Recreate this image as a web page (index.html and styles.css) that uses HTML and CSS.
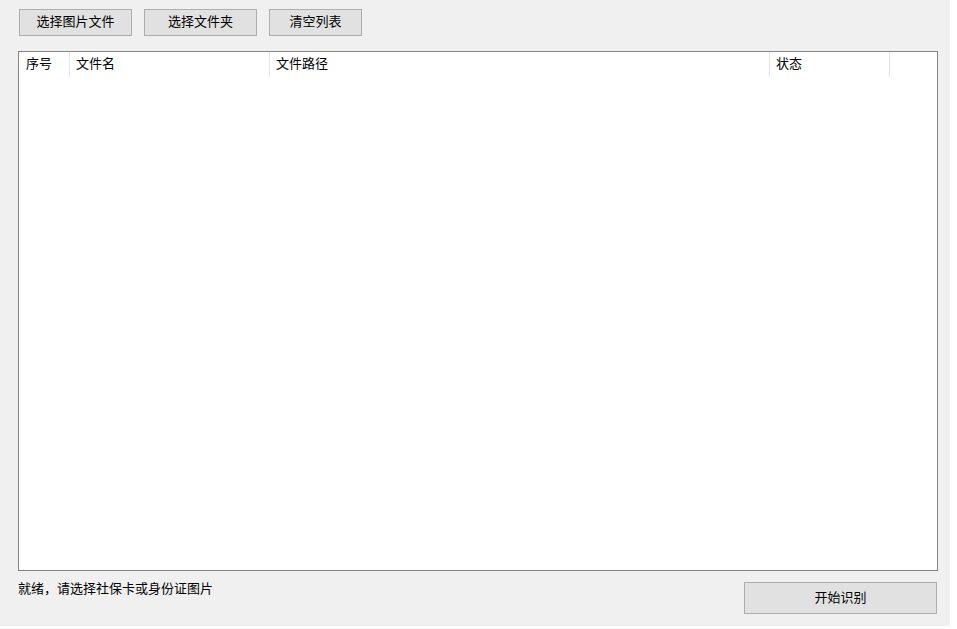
FILE: index.html
```html
<!DOCTYPE html>
<html lang="zh-CN">
<head>
<meta charset="utf-8">
<title>社保卡/身份证识别</title>
<link rel="stylesheet" href="styles.css">
</head>
<body>
<div class="window">
  <div class="toolbar">
    <button class="btn btn-img">选择图片文件</button>
    <button class="btn btn-folder">选择文件夹</button>
    <button class="btn btn-clear">清空列表</button>
  </div>
  <div class="list">
    <div class="list-head">
      <div class="col col-no">序号</div>
      <div class="col col-name">文件名</div>
      <div class="col col-path">文件路径</div>
      <div class="col col-status">状态</div>
      <div class="col col-rest"></div>
    </div>
  </div>
  <div class="footer">
    <div class="status">就绪，请选择社保卡或身份证图片</div>
    <button class="btn btn-start">开始识别</button>
  </div>
</div>
</body>
</html>
```

FILE: styles.css
```css
html, body {
  margin: 0;
  padding: 0;
  background: #ffffff;
}
body {
  font-family: "Noto Sans CJK SC", "Noto Sans", sans-serif;
  font-size: 13px;
  color: #000000;
}
.window {
  width: 950px;
  height: 626px;
  box-sizing: border-box;
  background: #f0f0f0;
  padding: 9px 12px 0 18px;
}
.toolbar {
  display: flex;
  gap: 12px;
  margin-left: 1px;
}
.btn {
  font-family: inherit;
  font-size: 13px;
  color: #000;
  background: #e1e1e1;
  border: 1px solid #adadad;
  border-radius: 0;
  padding: 0 0 4px 0;
  margin: 0;
  box-sizing: border-box;
  line-height: 1;
}
.toolbar .btn {
  height: 27px;
}
.btn-img { width: 113px; }
.btn-folder { width: 113px; }
.btn-clear { width: 93px; }
.list {
  margin-top: 15px;
  width: 920px;
  height: 520px;
  box-sizing: border-box;
  border: 1px solid #828282;
  background: #ffffff;
}
.list-head {
  display: flex;
  height: 25px;
}
.col {
  box-sizing: border-box;
  padding-left: 6px;
  line-height: 21px;
  height: 25px;
  border-right: 1px solid #e5e5e5;
  white-space: nowrap;
}
.col-no { width: 51px; padding-left: 7px; }
.col-name { width: 200px; }
.col-path { width: 500px; }
.col-status { width: 120px; }
.col-rest { width: 1px; border-right: none; padding: 0; }
.footer {
  display: flex;
  justify-content: space-between;
  align-items: flex-start;
  margin-top: 8px;
  width: 919px;
}
.status {
  line-height: 17px;
}
.btn-start {
  margin-top: 3px;
  width: 193px;
  height: 32px;
}
```
